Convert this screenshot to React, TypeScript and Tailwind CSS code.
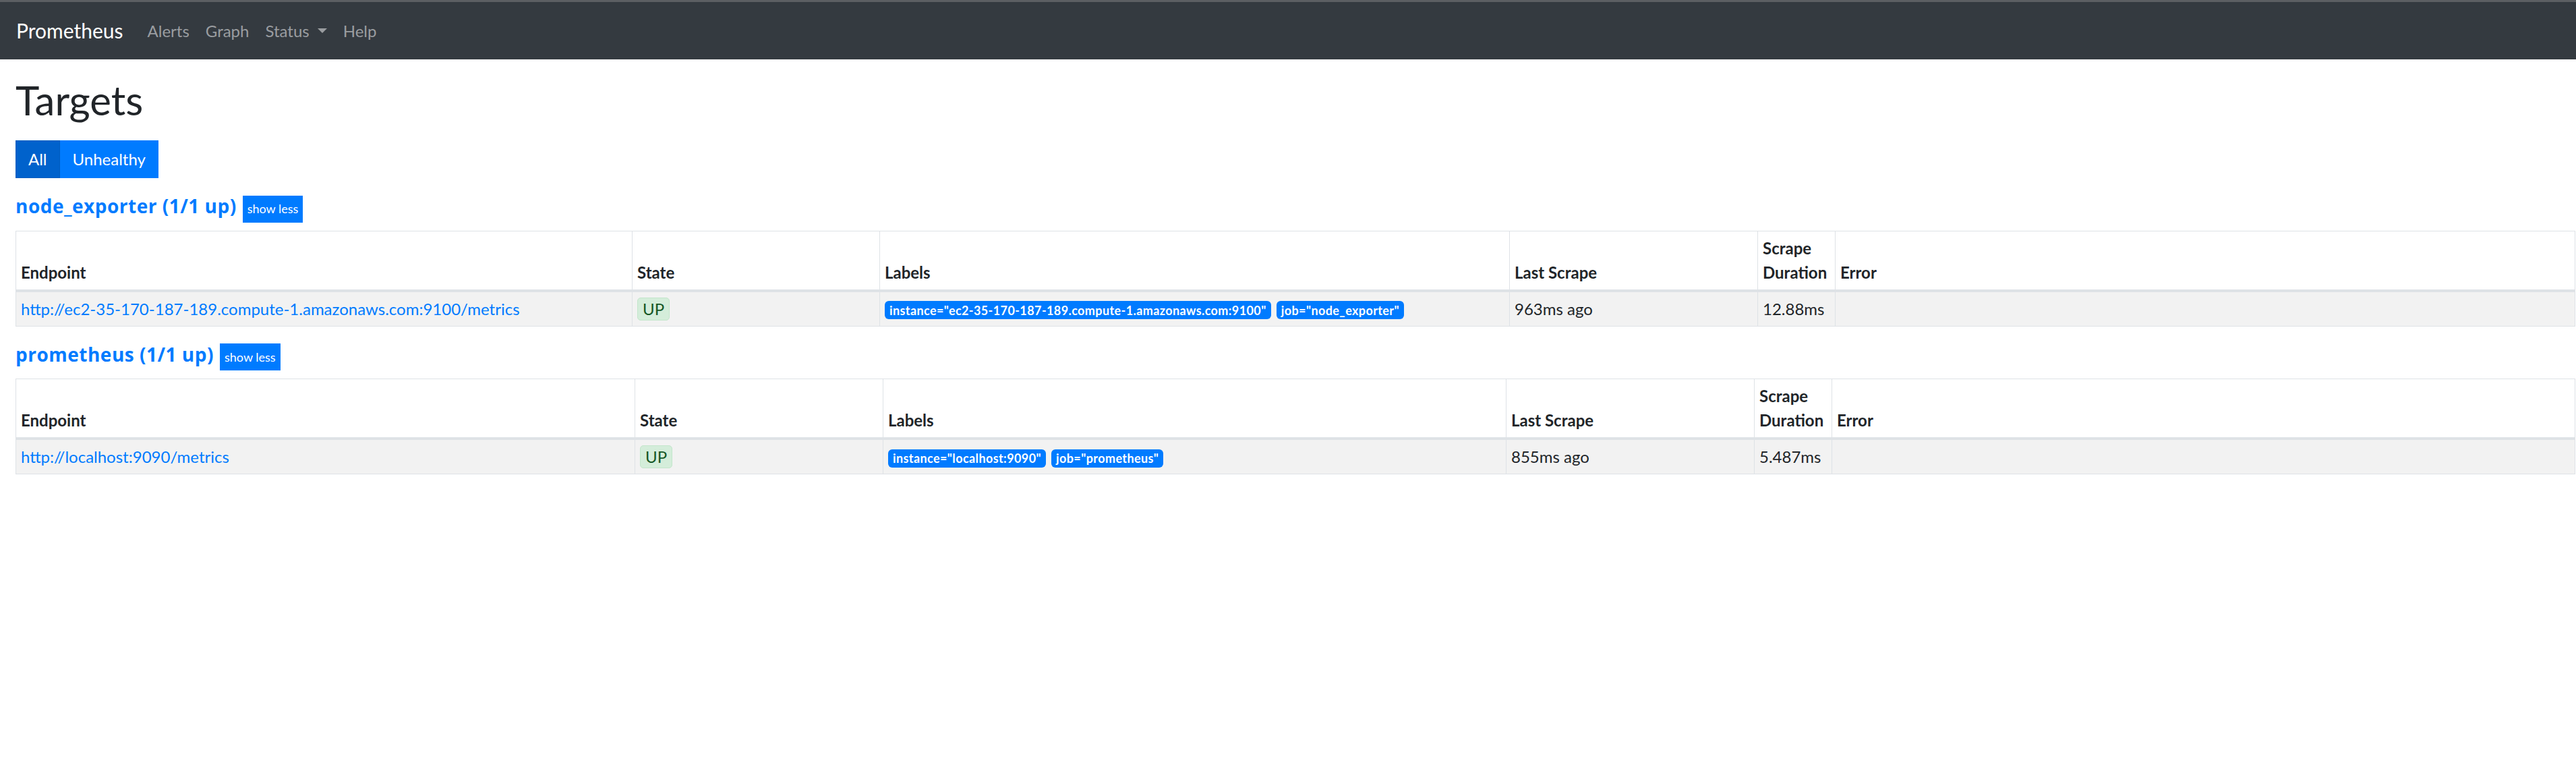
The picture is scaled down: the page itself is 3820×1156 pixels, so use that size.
import React from "react";

type Target = {
  endpoint: string;
  labels: string[];
  lastScrape: string;
  duration: string;
};

type Pool = {
  name: string;
  up: string;
  cols: number[];
  targets: Target[];
};

const pools: Pool[] = [
  {
    name: "node_exporter",
    up: "(1/1 up)",
    cols: [914, 367, 934, 368, 115, 1097],
    targets: [
      {
        endpoint: "http://ec2-35-170-187-189.compute-1.amazonaws.com:9100/metrics",
        labels: ['instance="ec2-35-170-187-189.compute-1.amazonaws.com:9100"', 'job="node_exporter"'],
        lastScrape: "963ms ago",
        duration: "12.88ms",
      },
    ],
  },
  {
    name: "prometheus",
    up: "(1/1 up)",
    cols: [918, 368, 924, 368, 115, 1102],
    targets: [
      {
        endpoint: "http://localhost:9090/metrics",
        labels: ['instance="localhost:9090"', 'job="prometheus"'],
        lastScrape: "855ms ago",
        duration: "5.487ms",
      },
    ],
  },
];

const th = "border border-[#dee2e6] border-b-4 px-[7px] py-[7px] text-left align-bottom font-bold leading-[36px]";
const td = "border border-[#dee2e6] px-[7px] py-[7px] align-top leading-[36px]";

function PoolPanel({ pool }: { pool: Pool }) {
  return (
    <div className="mt-[25px]">
      <div className="flex items-baseline">
        <a
          href="#"
          className="font-['Open_Sans','Lato',sans-serif] text-[28px] font-bold leading-[32px] tracking-[0.5px] text-[#007bff]"
        >
          {pool.name} {pool.up}
        </a>
        <button className="ml-[9px] bg-[#007bff] px-[7px] py-[6.5px] text-[18px] leading-[27px] text-white">
          show less
        </button>
      </div>
      <table className="mt-[12px] w-[3795px] table-fixed border-collapse text-[24px] text-[#212529]">
        <colgroup>
          {pool.cols.map((w, i) => (
            <col key={i} style={{ width: w }} />
          ))}
        </colgroup>
        <thead>
          <tr>
            <th className={th}>Endpoint</th>
            <th className={th}>State</th>
            <th className={th}>Labels</th>
            <th className={th}>Last Scrape</th>
            <th className={th}>
              Scrape
              <br />
              Duration
            </th>
            <th className={th}>Error</th>
          </tr>
        </thead>
        <tbody>
          {pool.targets.map((t) => (
            <tr key={t.endpoint} className="bg-[#f2f2f2]">
              <td className={td}>
                <a href="#" className="text-[#007bff]">
                  {t.endpoint}
                </a>
              </td>
              <td className={td}>
                <span className="inline-block rounded-[5px] border border-[#c3e6cb] bg-[#d4edda] px-[7px] leading-[32px] text-[#155724]">
                  UP
                </span>
              </td>
              <td className={td}>
                {t.labels.map((l) => (
                  <span
                    key={l}
                    className="mr-[8px] inline-block rounded-[6px] bg-[#007bff] px-[7px] py-[4.5px] text-[18px] font-bold leading-[18px] tracking-[0.4px] text-white"
                  >
                    {l}
                  </span>
                ))}
              </td>
              <td className={td}>{t.lastScrape}</td>
              <td className={td}>{t.duration}</td>
              <td className={td}></td>
            </tr>
          ))}
        </tbody>
      </table>
    </div>
  );
}

export default function App() {
  return (
    <div className="min-h-screen bg-white font-['Lato','Segoe_UI',sans-serif] text-[#212529]">
      <div className="h-[3px] bg-[#5c5f63]" />
      <nav className="flex h-[85px] items-center bg-[#343a40] px-[24px]">
        <a href="#" className="mr-[24px] text-[30px] leading-[45px] text-white">
          Prometheus
        </a>
        <ul className="flex text-[24px] leading-[36px] text-[#9a9da0]">
          <li className="px-[12px]">Alerts</li>
          <li className="px-[12px]">Graph</li>
          <li className="flex items-center px-[12px]">
            Status
            <span className="ml-[12px] inline-block h-0 w-0 border-x-[7px] border-t-[7px] border-x-transparent border-t-[#9a9da0]" />
          </li>
          <li className="px-[12px]">Help</li>
        </ul>
      </nav>
      <div className="pl-[23px]">
        <h1 className="mt-[24px] text-[60px] font-normal leading-[72px]">Targets</h1>
        <div className="mt-[24px] flex">
          <button className="border border-[#005cbf] bg-[#0062cc] px-[18px] py-[9px] text-[24px] leading-[36px] text-white">
            All
          </button>
          <button className="border border-[#007bff] bg-[#007bff] px-[18px] py-[9px] text-[24px] leading-[36px] text-white">
            Unhealthy
          </button>
        </div>
        {pools.map((p) => (
          <PoolPanel key={p.name} pool={p} />
        ))}
      </div>
    </div>
  );
}
